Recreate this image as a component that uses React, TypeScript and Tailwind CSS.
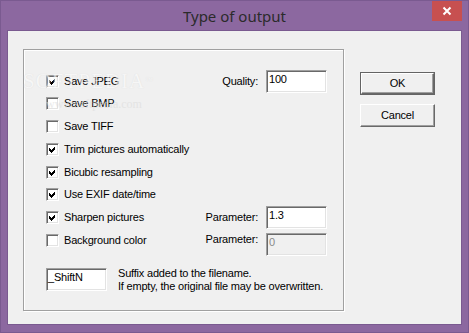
import React from "react";

const font = "font-['Liberation_Sans',Arial,sans-serif]";
const txt = "text-[11px] leading-[13px] tracking-[-0.2px] text-black whitespace-nowrap";

function Check({ checked }: { checked: boolean }) {
  return (
    <div className="w-[13px] h-[13px] shrink-0 bg-white border border-t-[#a0a0a0] border-l-[#a0a0a0] border-r-white border-b-white shadow-[inset_1px_1px_0_#696969,inset_-1px_-1px_0_#e3e3e3] relative">
      {checked && (
        <svg
          className="absolute left-[2px] top-[2px]"
          width="7"
          height="7"
          viewBox="0 0 7 7"
          shapeRendering="crispEdges"
        >
          <polygon points="0,2 2,4 6,0 6,3 2,7 0,5" fill="#000" />
        </svg>
      )}
    </div>
  );
}

function TextBox({
  value,
  disabled,
  className = "",
}: {
  value: string;
  disabled?: boolean;
  className?: string;
}) {
  return (
    <div
      className={`w-[61px] h-[23px] shrink-0 border border-t-[#a0a0a0] border-l-[#a0a0a0] border-r-white border-b-white shadow-[inset_1px_1px_0_#696969,inset_-1px_-1px_0_#e3e3e3] pl-[2px] pt-[2px] text-[11px] leading-[13px] tracking-[-0.2px] ${
        disabled ? "bg-[#f0f0f0] text-[#8a8a8a]" : "bg-white text-black"
      } ${className}`}
    >
      {value}
    </div>
  );
}

function Row({
  checked,
  label,
  mt,
  right,
}: {
  checked: boolean;
  label: string;
  mt: string;
  right?: React.ReactNode;
}) {
  return (
    <div className={`flex items-center h-[13px] ${mt}`}>
      <Check checked={checked} />
      <span className={`ml-[5px] ${txt}`}>{label}</span>
      {right}
    </div>
  );
}

function Field({ label, value }: { label: string; value: string }) {
  return (
    <div className="ml-auto flex items-center">
      <span className={`${txt} mr-[8px]`}>{label}</span>
      <TextBox value={value} />
    </div>
  );
}

function Button({ label, isDefault }: { label: string; isDefault?: boolean }) {
  const inner = (
    <div className={`flex-1 flex items-center justify-center bg-[#f0f0f0] border border-t-white border-l-white border-r-[#696969] border-b-[#696969] shadow-[inset_-1px_-1px_0_#a0a0a0] ${txt}`}>
      {label}
    </div>
  );
  return isDefault ? (
    <div className="w-[75px] h-[23px] flex border border-[#646464]">{inner}</div>
  ) : (
    <div className="w-[75px] h-[23px] flex">{inner}</div>
  );
}

export default function App() {
  return (
    <div
      className={`w-[469px] h-[333px] bg-[#8c68a0] border border-[#7a5a90] flex flex-col relative overflow-hidden ${font}`}
    >
      <div className="h-[29px] shrink-0 flex items-center justify-center relative">
        <span className="font-['Noto_Sans',sans-serif] text-[15px] text-[#2b2b2b] mt-[1px]">
          Type of output
        </span>
        <div className="absolute top-[0px] right-[6px] w-[30px] h-[20px] bg-[#c75050] flex items-center justify-center">
          <svg width="10" height="10" viewBox="0 0 10 10">
            <path d="M1.5 1.5 L8.5 8.5 M8.5 1.5 L1.5 8.5" stroke="#fff" strokeWidth="2" />
          </svg>
        </div>
      </div>

      <div className="flex-1 mx-[6px] mb-[7px] border border-[#7a5a90] bg-[#f0f0f0] flex pl-[15px] pt-[18px]">
        <div className="w-[321px] h-[262px] border border-[#a0a0a0] shadow-[1px_1px_0_#fff,inset_1px_1px_0_#fff] flex flex-col pl-[22px] pr-[16px]">
          <Row
            checked
            label="Save JPEG"
            mt="mt-[25px]"
            right={<Field label="Quality:" value="100" />}
          />
          <Row checked={false} label="Save BMP" mt="mt-[9px]" />
          <Row checked={false} label="Save TIFF" mt="mt-[10px]" />
          <Row checked label="Trim pictures automatically" mt="mt-[10px]" />
          <Row checked label="Bicubic resampling" mt="mt-[10px]" />
          <Row checked label="Use EXIF date/time" mt="mt-[9px]" />
          <Row
            checked
            label="Sharpen pictures"
            mt="mt-[10px]"
            right={<Field label="Parameter:" value="1.3" />}
          />
          <Row
            checked={false}
            label="Background color"
            mt="mt-[10px]"
            right={
              <div className="ml-auto self-start -mt-px flex items-start">
                <span className={`${txt} mr-[8px]`}>Parameter:</span>
                <TextBox value="0" disabled />
              </div>
            }
          />
          <div className="flex items-start mt-[21px]">
            <TextBox value="_ShiftN" className="!pl-[1px]" />
            <div className={`ml-[11px] mt-[-1px] ${txt}`}>
              <div>Suffix added to the filename.</div>
              <div>If empty, the original file may be overwritten.</div>
            </div>
          </div>
        </div>

        <div className="ml-[16px] mt-[23px] flex flex-col gap-[9px]">
          <Button label="OK" isDefault />
          <Button label="Cancel" />
        </div>
      </div>

      <div className="absolute left-[22px] top-[70px] pointer-events-none select-none opacity-60">
        <div className="font-['Liberation_Serif',serif] text-[21px] leading-[20px] tracking-[1px] text-[#fafafa] [text-shadow:0_0_1px_#cfcfcf]">
          SOFTPEDIA<span className="text-[8px] align-top">™</span>
        </div>
        <div className="ml-[23px] mt-[7px] font-['Liberation_Serif',serif] text-[12px] leading-[12px] text-[#dcdcdc]">
          www.softpedia.com
        </div>
      </div>
    </div>
  );
}
